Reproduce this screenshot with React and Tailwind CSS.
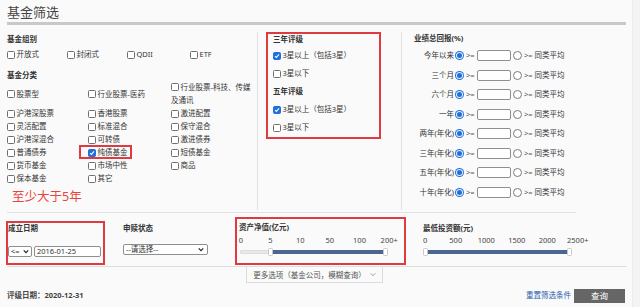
import React from "react";

const CK = ({ checked }) =>
  checked ? (
    <span className="inline-flex w-[8px] h-[8px] shrink-0 items-center justify-center rounded-[1.5px] bg-[#1f6fdc] border border-[#1f6fdc]">
      <svg viewBox="0 0 8 8" className="w-[8px] h-[8px]">
        <path d="M1.3 4.1 L3.2 5.9 L6.7 1.9" stroke="white" strokeWidth="1.4" fill="none" />
      </svg>
    </span>
  ) : (
    <span className="inline-flex w-[8px] h-[8px] shrink-0 rounded-[1.5px] bg-white border border-[#6f6f6f]" />
  );

const Item = ({ label, checked, red }) => (
  <div className="relative flex w-fit items-center gap-[1.5px] h-[13px]">
    <CK checked={checked} />
    <span>{label}</span>
    {red && <span className="absolute -left-[9px] -right-[4px] -top-[1px] bottom-0 border-2 border-[#e0393e]" />}
  </div>
);

const Radio = ({ checked }) =>
  checked ? (
    <span className="flex w-[9px] h-[9px] shrink-0 items-center justify-center rounded-full bg-[#1f6fdc]">
      <span className="block w-[5px] h-[5px] rounded-full bg-[#1f6fdc] ring-1 ring-[#e8f0fc]" />
    </span>
  ) : (
    <span className="block w-[9px] h-[9px] shrink-0 rounded-full bg-white border border-[#7a7a7a]" />
  );

const Chevron = () => (
  <svg viewBox="0 0 8 6" className="w-[6px] h-[5px]">
    <path d="M1 1.5 L4 4.5 L7 1.5" stroke="#222" strokeWidth="1.6" fill="none" />
  </svg>
);

const perfRows = ["今年以来", "三个月", "六个月", "一年", "两年(年化)", "三年(年化)", "五年(年化)", "十年(年化)"];

const Slider = ({ width, labels, labelW, labelOffset, h1, fillL, fillW, h2 }) => (
  <div>
    <div className="flex h-[10px] leading-[10px] text-[#444]" style={{ marginLeft: labelOffset }}>
      {labels.map((l) => (
        <span key={l} className="text-center" style={{ width: labelW }}>
          {l}
        </span>
      ))}
    </div>
    <div className="relative mt-[3px] h-[8px]" style={{ width }}>
      <div className="absolute left-0 right-0 top-[2px] h-[4px] rounded-[1px] bg-[#e9e9e9] border border-[#dcdcdc]" />
      <div className="absolute top-[2px] h-[4px] bg-[#4a6791]" style={{ left: fillL, width: fillW }} />
      <div className="absolute top-0 h-[8px] w-[5px] rounded-[1.5px] bg-white border border-[#c8c8c8]" style={{ left: h1 }} />
      <div className="absolute top-0 h-[8px] w-[5px] rounded-[1.5px] bg-white border border-[#c8c8c8]" style={{ left: h2 }} />
    </div>
  </div>
);

export default function App() {
  return (
    <div className="w-[640px] h-[307px] bg-[#f4f4f4] overflow-hidden font-['Noto_Sans','Noto_Sans_CJK_SC',sans-serif] text-[7.5px] text-[#333]">
      <div className="w-[633px] h-full bg-[#fafafa] border-r border-[#ececec]">
        {/* Title */}
        <div className="pl-[7px] pt-[4px] h-[22px] text-[13px] leading-[16px] text-[#444]">基金筛选</div>
        <div className="ml-[7px] w-[619px] h-[3px] bg-[#c9c9c9]" />

        {/* Top section */}
        <div className="flex h-[187px]">
          {/* Left column */}
          <div className="mt-[7px] h-[178px] w-[258px] pl-[7px] border-r border-[#e2e2e2]">
            <div className="mt-[2px] h-[10px] leading-[10px] font-bold">基金组别</div>
            <div className="mt-[4px] h-[10px] grid grid-cols-[60px_60px_63px_auto] items-center">
              <Item label="开放式" />
              <Item label="封闭式" />
              <Item label="QDII" />
              <Item label="ETF" />
            </div>
            <div className="mt-[12px] h-[10px] leading-[10px] font-bold">基金分类</div>
            <div className="mt-[1px] grid grid-cols-[81px_83px_87px] items-center leading-[13px]">
              <Item label="股票型" />
              <Item label="行业股票-医药" />
              <div className="leading-[13px]">
                <span className="inline-flex align-[-1px] mr-[1.5px]">
                  <CK />
                </span>
                行业股票-科技、传媒
                <br />
                及通讯
              </div>
              <Item label="沪港深股票" />
              <Item label="香港股票" />
              <Item label="激进配置" />
              <Item label="灵活配置" />
              <Item label="标准混合" />
              <Item label="保守混合" />
              <Item label="沪港深混合" />
              <Item label="可转债" />
              <Item label="激进债券" />
              <Item label="普通债券" />
              <Item label="纯债基金" checked red />
              <Item label="短债基金" />
              <Item label="货币基金" />
              <Item label="市场中性" />
              <Item label="商品" />
              <Item label="保本基金" />
              <Item label="其它" />
              <div />
            </div>
            <div className="mt-[5px] pl-[5px] text-[12.5px] leading-[14px] text-[#e8433c]">至少大于5年</div>
          </div>

          {/* Middle column */}
          <div className="mt-[7px] h-[178px] w-[144px] border-r border-[#e2e2e2]">
            <div className="ml-[8px] w-[115px] h-[107px] border-2 border-[#e0393e] pl-[5px]">
              <div className="h-[10px] leading-[10px] font-bold">三年评级</div>
              <div className="mt-[3px] h-[18px] flex items-center gap-[1.5px]">
                <CK checked />
                <span>3星以上（包括3星）</span>
              </div>
              <div className="h-[18px] flex items-center gap-[1.5px]">
                <CK />
                <span>3星以下</span>
              </div>
              <div className="h-[18px] flex items-center font-bold">五年评级</div>
              <div className="h-[18px] flex items-center gap-[1.5px]">
                <CK checked />
                <span>3星以上（包括3星）</span>
              </div>
              <div className="h-[18px] flex items-center gap-[1.5px]">
                <CK />
                <span>3星以下</span>
              </div>
            </div>
          </div>

          {/* Right column */}
          <div className="mt-[7px] flex-1">
            <div className="mt-[1px] pl-[12px] h-[10px] leading-[10px] font-bold">业绩总回报(%)</div>
            <div className="mt-[3px]">
              {perfRows.map((r) => (
                <div key={r} className="flex items-center h-[19.5px]">
                  <span className="w-[52px] text-right whitespace-nowrap">{r}</span>
                  <span className="ml-[1px]">
                    <Radio checked />
                  </span>
                  <span className="ml-[2px] w-[10px] text-[#555]">&gt;=</span>
                  <span className="ml-[1px] w-[34px] h-[11px] bg-white border border-[#8f8f8f] rounded-[2px]" />
                  <span className="ml-[2px]">
                    <Radio />
                  </span>
                  <span className="ml-[2px] whitespace-nowrap">
                    <span className="text-[#555]">&gt;=</span> 同类平均
                  </span>
                </div>
              ))}
            </div>
          </div>
        </div>

        <div className="ml-[7px] w-[569px] h-px bg-[#e2e2e2]" />

        {/* Bottom section */}
        <div className="flex items-start h-[53px]">
          <div className="ml-[6px] mt-[8px] w-[99px] h-[44px] border-2 border-[#e0393e]">
            <div className="h-[10px] leading-[10px] font-bold">成立日期</div>
            <div className="mt-[13px] flex items-center">
              <div className="w-[24px] h-[11px] bg-white border border-[#8f8f8f] rounded-[2px] flex items-center justify-between pl-[2px] pr-[2px]">
                <span className="leading-[9px]">&lt;=</span>
                <Chevron />
              </div>
              <div className="ml-[2px] w-[67px] h-[11px] bg-white border border-[#8f8f8f] rounded-[2px] flex items-center pl-[2px] leading-[9px]">
                2016-01-25
              </div>
            </div>
          </div>

          <div className="ml-[18px] mt-[10px]">
            <div className="h-[10px] leading-[10px] font-bold">申赎状态</div>
            <div className="mt-[11px] w-[85px] h-[11px] bg-white border border-[#8f8f8f] rounded-[2px] flex items-center justify-between pl-[2px] pr-[3px]">
              <span className="leading-[9px]">--请选择--</span>
              <Chevron />
            </div>
          </div>

          <div className="ml-[27px] mt-[4px] w-[171px] h-[48px] border-2 border-[#e0393e]">
            <div className="mt-[3px] pl-[2px] h-[10px] leading-[10px] font-bold">资产净值(亿元)</div>
            <div className="mt-[3px] pl-[3px]">
              <Slider
                width={147}
                labels={["0", "5", "10", "50", "100", "200+"]}
                labelW={30}
                labelOffset={-14}
                h1={28}
                fillL={33}
                fillW={110}
                h2={143}
              />
            </div>
          </div>

          <div className="ml-[17px] mt-[10px]">
            <div className="h-[10px] leading-[10px] font-bold">最低投资额(元)</div>
            <div className="mt-[2px]">
              <Slider
                width={149}
                labels={["0", "500", "1000", "1500", "2000", "2500+"]}
                labelW={30.5}
                labelOffset={-13}
                h1={0}
                fillL={5}
                fillW={139}
                h2={144}
              />
            </div>
          </div>
        </div>

        <div className="ml-[7px] w-[620px] h-px bg-[#dedede]" />

        <div className="ml-[246px] w-[137px] h-[16px] border border-t-0 border-[#dcdcdc] flex items-center justify-center gap-[4px] text-[#555]">
          <span className="leading-[10px]">更多选项（基金公司，模糊查询）</span>
          <svg viewBox="0 0 8 6" className="w-[6px] h-[5px]">
            <path d="M1 1.5 L4 4.5 L7 1.5" stroke="#777" strokeWidth="1" fill="none" />
          </svg>
        </div>

        <div className="mt-[6px] h-[14px] flex items-center pl-[7px] pr-[7px]">
          <span className="font-bold text-[#444]">评级日期：2020-12-31</span>
          <span className="ml-auto text-[#2a5caa]">重置筛选条件</span>
          <span className="ml-[3px] w-[51px] h-[14px] bg-[#666] text-white text-[8.5px] flex items-center justify-center">查询</span>
        </div>
      </div>
    </div>
  );
}
